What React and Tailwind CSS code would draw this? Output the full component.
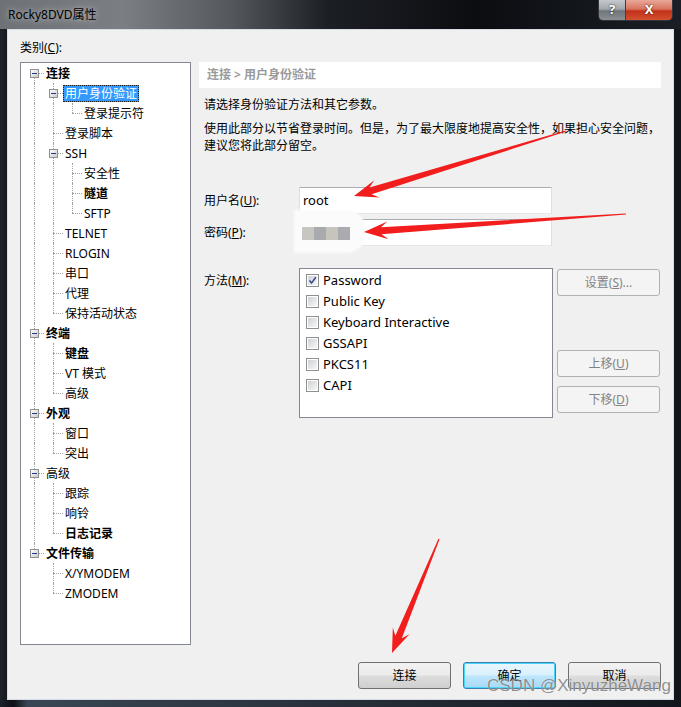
import React from "react";

const tree = [
  {
    label: "连接",
    bold: true,
    children: [
      { label: "用户身份验证", selected: true, children: [{ label: "登录提示符" }] },
      { label: "登录脚本" },
      {
        label: "SSH",
        children: [{ label: "安全性" }, { label: "隧道", bold: true }, { label: "SFTP" }],
      },
      { label: "TELNET" },
      { label: "RLOGIN" },
      { label: "串口" },
      { label: "代理" },
      { label: "保持活动状态" },
    ],
  },
  {
    label: "终端",
    bold: true,
    children: [{ label: "键盘", bold: true }, { label: "VT 模式" }, { label: "高级" }],
  },
  { label: "外观", bold: true, children: [{ label: "窗口" }, { label: "突出" }] },
  {
    label: "高级",
    children: [{ label: "跟踪" }, { label: "响铃" }, { label: "日志记录", bold: true }],
  },
  {
    label: "文件传输",
    bold: true,
    children: [{ label: "X/YMODEM" }, { label: "ZMODEM" }],
  },
];

function flatten(nodes, guides = [], out = [], isRoot = true) {
  nodes.forEach((n, i) => {
    const last = i === nodes.length - 1;
    out.push({ ...n, guides, last, first: isRoot && i === 0 });
    if (n.children) flatten(n.children, [...guides, !last], out, false);
  });
  return out;
}

const rows = flatten(tree);

function TreeRow({ row }) {
  return (
    <div className="flex h-[20px] items-center">
      {row.guides.map((more, i) => (
        <div key={i} className="relative h-full w-[19px] shrink-0">
          {more && (
            <span className="absolute left-[9px] top-0 bottom-0 border-l border-dotted border-[#a0a0a0]" />
          )}
        </div>
      ))}
      <div className="relative h-full w-[19px] shrink-0">
        {!row.first && (
          <span className="absolute left-[9px] top-0 h-[10px] border-l border-dotted border-[#a0a0a0]" />
        )}
        {!row.last && (
          <span className="absolute left-[9px] top-[10px] bottom-0 border-l border-dotted border-[#a0a0a0]" />
        )}
        <span className="absolute left-[9px] top-[10px] w-[10px] border-t border-dotted border-[#a0a0a0]" />
        {row.children && (
          <span className="absolute left-[5px] top-[6px] flex h-[9px] w-[9px] items-center justify-center border border-[#919191] bg-[linear-gradient(135deg,#ffffff,#c9c9c9)]">
            <span className="h-[1px] w-[5px] bg-[#1f3a8a]" />
          </span>
        )}
      </div>
      {row.selected ? (
        <span className="flex h-[17px] items-center border border-dotted border-[#1c1c1c] bg-[#3399ff] px-[1px] leading-[15px] text-white">
          {row.label}
        </span>
      ) : (
        <span className={`px-[2px] leading-[17px] text-black ${row.bold ? "font-bold" : ""}`}>
          {row.label}
        </span>
      )}
    </div>
  );
}

function Checkbox({ checked }) {
  return (
    <span className="flex h-[13px] w-[13px] shrink-0 border border-[#8e8f8f] bg-white p-[1px]">
      <span className="relative flex-1 bg-[linear-gradient(135deg,#cfd2d6,#f7f7f7)]">
        {checked && (
          <svg viewBox="0 0 9 9" className="absolute inset-0 h-full w-full">
            <path d="M1.5 4.5 L3.6 7 L7.8 1.2" fill="none" stroke="#3b4f8c" strokeWidth="1.6" />
          </svg>
        )}
      </span>
    </span>
  );
}

function WinButton({ children, disabled, primary, className = "" }) {
  let look =
    "border-[#707070] bg-[linear-gradient(#f2f2f2_0%,#ebebeb_48%,#dddddd_52%,#cfcfcf_100%)] text-black";
  if (disabled) look = "border-[#adb2b5] bg-[#f4f4f4] text-[#838383]";
  if (primary)
    look =
      "border-[#3c7fb1] bg-[linear-gradient(#eaf6fd_0%,#d9f0fc_48%,#bee6fd_52%,#a7d9f5_100%)] text-black shadow-[inset_0_0_0_1px_#48d7fb]";
  return (
    <div
      className={`flex h-[27px] items-center justify-center rounded-[3px] border ${look} ${className}`}
    >
      {children}
    </div>
  );
}

function Arrow({ tx, ty, px, py }) {
  const dx = px - tx;
  const dy = py - ty;
  const len = Math.hypot(dx, dy);
  const ux = dx / len;
  const uy = dy / len;
  const nx = -uy;
  const ny = ux;
  const hl = 24;
  const hw = 9;
  const bw = 3.5;
  const tw = 0.6;
  const bx = px - ux * hl;
  const by = py - uy * hl;
  const ix = px - ux * hl * 0.72;
  const iy = py - uy * hl * 0.72;
  const pts = [
    [tx + nx * tw, ty + ny * tw],
    [ix + nx * bw, iy + ny * bw],
    [bx + nx * hw, by + ny * hw],
    [px, py],
    [bx - nx * hw, by - ny * hw],
    [ix - nx * bw, iy - ny * bw],
    [tx - nx * tw, ty - ny * tw],
  ]
    .map((p) => p.join(","))
    .join(" ");
  return <polygon points={pts} fill="#f21d1d" />;
}

export default function App() {
  return (
    <div className="relative flex h-[707px] w-[681px] flex-col overflow-hidden bg-[linear-gradient(90deg,#1d232b_0%,#0d1015_2%,#3a4654_4%,#12161c_100%)] font-['Noto_Sans','Noto_Sans_CJK_SC',sans-serif] text-[12px] text-black">
      {/* title bar */}
      <div className="flex h-[29px] shrink-0 items-start bg-[linear-gradient(90deg,#6e7175_0%,#7b7e82_18%,#54575b_34%,#1c1f24_48%,#0b0d11_70%,#1b1f25_100%)]">
        <div className="pl-[8px] pt-[6px] text-[12px] leading-[17px] text-black [text-shadow:0_0_6px_rgba(255,255,255,0.7)]">
          Rocky8DVD属性
        </div>
        <div className="ml-auto mr-[8px] flex overflow-hidden rounded-b-[5px] border border-t-0 border-[#33373d]">
          <div className="flex h-[20px] w-[27px] items-center justify-center border-r border-[#3a3e44] bg-[linear-gradient(#c5c9ce_0%,#a3a8ae_45%,#6f757c_55%,#8b9096_100%)] text-[13px] font-bold text-white [text-shadow:0_0_2px_#000]">
            ?
          </div>
          <div className="flex h-[20px] w-[46px] items-center justify-center bg-[linear-gradient(#e9a898_0%,#d9745f_45%,#c1321a_55%,#d4502f_100%)] text-[13px] font-bold text-white [text-shadow:0_0_2px_#3a0000]">
            X
          </div>
        </div>
      </div>

      {/* client area */}
      <div className="mx-[7px] mb-[7px] flex flex-1 flex-col border border-[#d7dde4] bg-[#f0f0f0] px-[12px] pt-[9px]">
        <div className="flex">
          {/* left: category tree */}
          <div className="flex w-[171px] flex-col">
            <div className="leading-[17px]">
              类别(<span className="underline">C</span>):
            </div>
            <div className="mt-[6px] h-[583px] border border-[#828790] bg-white pl-[4px]">
              {rows.map((r, i) => (
                <TreeRow key={i} row={r} />
              ))}
            </div>
          </div>

          {/* right: settings */}
          <div className="ml-[8px] flex w-[462px] flex-col pt-[23px]">
            <div className="flex h-[26px] items-center bg-white pl-[8px] font-bold text-[#9a9a9a]">
              连接 &gt; 用户身份验证
            </div>
            <div className="pl-[5px]">
              <p className="mt-[8px] leading-[17px]">请选择身份验证方法和其它参数。</p>
              <p className="mt-[7px] leading-[17px]">
                使用此部分以节省登录时间。但是，为了最大限度地提高安全性，如果担心安全问题，
                <br />
                建议您将此部分留空。
              </p>

              <div className="mt-[33px] flex items-center">
                <div className="w-[95px]">
                  用户名(<span className="underline">U</span>):
                </div>
                <div className="flex h-[27px] w-[253px] items-center border border-[#abadb3] border-b-[#e3e9ef] border-x-[#dbdfe6] bg-white pl-[3px] text-[13px]">
                  root
                </div>
              </div>

              <div className="mt-[5px] flex items-center">
                <div className="w-[95px]">
                  密码(<span className="underline">P</span>):
                </div>
                <div className="relative h-[27px] w-[253px] border border-[#abadb3] border-b-[#e3e9ef] border-x-[#dbdfe6] bg-white">
                  <div className="absolute left-[-6px] top-[-10px] h-[43px] w-[72px] rounded-r-[20px] bg-[#fbfbfb] blur-[1px]" />
                  <div className="absolute left-[2px] top-[7px] flex h-[13px]">
                    <span className="w-[12px] bg-[#c8c6c0]" />
                    <span className="w-[12px] bg-[#a8aaae]" />
                    <span className="w-[12px] bg-[#c6c4bd]" />
                    <span className="w-[12px] bg-[#a9abaf]" />
                  </div>
                </div>
              </div>

              <div className="mt-[22px] flex items-start">
                <div className="w-[95px] pt-[4px] leading-[17px]">
                  方法(<span className="underline">M</span>):
                </div>
                <div className="h-[150px] w-[254px] border border-[#828790] bg-white px-[6px] pt-[1px]">
                  {[
                    ["Password", true],
                    ["Public Key", false],
                    ["Keyboard Interactive", false],
                    ["GSSAPI", false],
                    ["PKCS11", false],
                    ["CAPI", false],
                  ].map(([label, checked]) => (
                    <div key={label} className="flex h-[21px] items-center gap-[4px] text-[13px]">
                      <Checkbox checked={checked} />
                      <span>{label}</span>
                    </div>
                  ))}
                </div>
                <div className="ml-[4px] flex w-[103px] flex-col pt-[1px]">
                  <WinButton disabled>
                    设置(<span className="underline">S</span>)...
                  </WinButton>
                  <WinButton disabled className="mt-[54px]">
                    上移(<span className="underline">U</span>)
                  </WinButton>
                  <WinButton disabled className="mt-[9px]">
                    下移(<span className="underline">D</span>)
                  </WinButton>
                </div>
              </div>
            </div>
          </div>
        </div>

        {/* dialog buttons */}
        <div className="mt-[17px] flex justify-end gap-[12px]">
          <WinButton className="w-[93px]">连接</WinButton>
          <WinButton primary className="w-[93px]">
            确定
          </WinButton>
          <WinButton className="w-[93px]">取消</WinButton>
        </div>
      </div>

      {/* annotation arrows */}
      <svg className="pointer-events-none absolute inset-0" width="681" height="707">
        <Arrow tx={566} ty={131} px={354} py={196} />
        <Arrow tx={626} ty={214} px={364} py={232} />
        <Arrow tx={439} ty={539} px={392} py={653} />
      </svg>

      {/* watermark */}
      <div className="pointer-events-none absolute left-[487px] top-[675px] font-['Liberation_Sans',sans-serif] text-[17px] leading-[22px] text-[rgba(95,95,95,0.7)] [text-shadow:0_0_1px_rgba(255,255,255,0.8)]">
        CSDN @XinyuzheWang
      </div>
    </div>
  );
}
